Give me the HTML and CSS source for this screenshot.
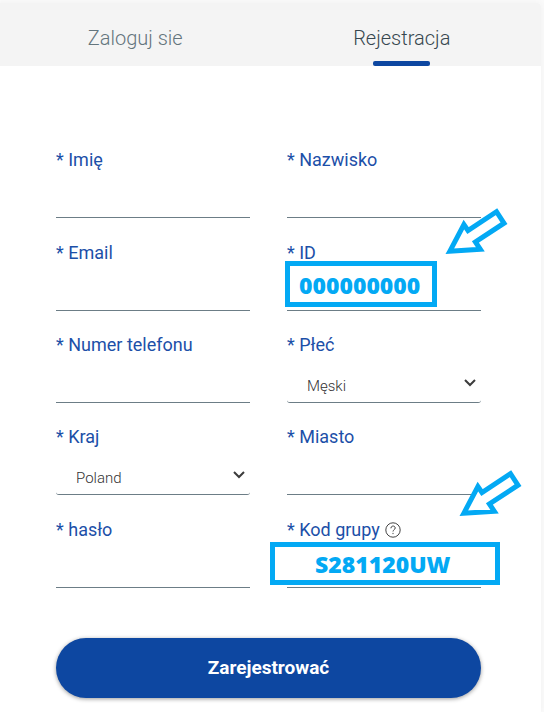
FILE: index.html
```html
<!DOCTYPE html>
<html lang="pl">
<head>
<meta charset="utf-8">
<meta name="viewport" content="width=device-width, initial-scale=1">
<title>Rejestracja</title>
<link rel="stylesheet" href="styles.css">
</head>
<body>
<main class="card">
  <nav class="tabs">
    <a class="tab" href="#login">Zaloguj sie</a>
    <a class="tab tab-active" href="#register" aria-current="page">Rejestracja</a>
  </nav>
  <form class="form">
    <div class="fields">
      <div class="field">
        <label for="first">* Imię</label>
        <input id="first" type="text">
      </div>
      <div class="field">
        <label for="last">* Nazwisko</label>
        <input id="last" type="text">
      </div>
      <div class="field">
        <label for="email">* Email</label>
        <input id="email" type="email">
      </div>
      <div class="field">
        <label for="pid">* ID</label>
        <input id="pid" class="marked marked-id" type="text" value="000000000">
        <span class="frame frame-id"></span>
        <svg class="arrow arrow-id" viewBox="0 0 62 46" aria-hidden="true"><path d="M4.800 43.300 18.900 16.600 23 22.500 51.500 3.700 59 15.200 30.400 34 35.300 41.300z"/></svg>
      </div>
      <div class="field">
        <label for="phone">* Numer telefonu</label>
        <input id="phone" type="tel">
      </div>
      <div class="field">
        <label for="sex">* Płeć</label>
        <select id="sex"><option>Męski</option><option>Żeński</option></select>
        <svg class="chevron" viewBox="0 0 12 8" aria-hidden="true"><path d="M1 1l5 5 5-5"/></svg>
      </div>
      <div class="field">
        <label for="country">* Kraj</label>
        <select id="country"><option>Poland</option></select>
        <svg class="chevron" viewBox="0 0 12 8" aria-hidden="true"><path d="M1 1l5 5 5-5"/></svg>
      </div>
      <div class="field">
        <label for="city">* Miasto</label>
        <input id="city" type="text">
      </div>
      <div class="field">
        <label for="password">* hasło</label>
        <input id="password" type="password">
      </div>
      <div class="field">
        <div class="label-row">
          <label for="group">* Kod grupy</label>
          <button class="help" type="button" aria-label="Pomoc">
            <svg viewBox="0 0 16 16"><circle cx="8" cy="8" r="7.200"/><path d="M5.900 6.300c0-3 4.300-3 4.300-.3 0 1.700-2.200 1.800-2.200 3.500M8 10.900v1.200"/></svg>
          </button>
        </div>
        <input id="group" class="marked marked-group" type="text" value="S281120UW">
        <span class="frame frame-group"></span>
        <svg class="arrow arrow-group" viewBox="0 0 62 46" aria-hidden="true"><path d="M4.800 43.300 18.900 16.600 23 22.500 51.500 3.700 59 15.200 30.400 34 35.300 41.300z"/></svg>
      </div>
    </div>
    <button class="submit" type="submit">Zarejestrować</button>
  </form>
</main>
</body>
</html>
```
FILE: styles.css
```css
* {
  box-sizing: border-box;
}

body {
  margin: 0;
  background: #fafafa;
  font-family: Roboto, "Liberation Sans", sans-serif;
  overflow: hidden auto;
}

.card {
  margin: 3px 3px 0 -4px;
  min-height: calc(100vh - 3px);
  background: #fff;
  border-radius: 4px 4px 0 0;
  box-shadow: 0 0 6px rgba(0, 0, 0, 0.04);
}

.tabs {
  display: flex;
  padding: 0 6px;
  background: #f4f4f4;
  border-radius: 4px 4px 0 0;
}

.tab {
  flex: 1;
  display: flex;
  flex-direction: column;
  align-items: center;
  padding-top: 23px;
  height: 63px;
  font-size: 20px;
  font-weight: 300;
  line-height: 24px;
  color: #64757d;
  text-decoration: none;
}

.tab-active {
  color: #37474f;
}

.tab-active::after {
  content: "";
  width: 57px;
  height: 5px;
  margin-top: auto;
  border-radius: 2px;
  background: #0d47a1;
}

.form {
  padding: 59px 60px 14px;
}

.fields {
  display: grid;
  grid-template-columns: 1fr 1fr;
  grid-template-rows: 93px 93px 92px 92px 93px;
  column-gap: 37px;
}

.field {
  position: relative;
  display: flex;
  flex-direction: column;
  justify-content: flex-end;
  min-width: 0;
}

label {
  font-size: 18px;
  line-height: 24px;
  color: #1c4fa8;
}

.label-row {
  display: flex;
  align-items: center;
  gap: 5px;
}

input,
select {
  width: 100%;
  height: 46px;
  margin: 0;
  padding: 0;
  border: 0;
  border-bottom: 1px solid #6c7d86;
  border-radius: 0;
  background: transparent;
  font: 300 15px/20px Roboto, "Liberation Sans", sans-serif;
  color: #333;
  outline: 0;
}

select {
  appearance: none;
  padding: 13px 28px 0 20px;
  border-radius: 3px;
}

.chevron {
  position: absolute;
  right: 5px;
  bottom: 16px;
  width: 12px;
  height: 8px;
  fill: none;
  stroke: #3c3c3c;
  stroke-width: 2;
  pointer-events: none;
}

.marked {
  font: 800 23px/30px "Open Sans", "Noto Sans", sans-serif;
  color: #03a9f4;
}

.marked-id {
  padding: 0 0 6px 12px;
}

.marked-group {
  padding: 0 0 2px 28px;
}

.frame {
  position: absolute;
  border: 5px solid #03a9f4;
  pointer-events: none;
}

.frame-id {
  left: -2px;
  bottom: 4px;
  width: 152px;
  height: 46px;
}

.frame-group {
  left: -17px;
  right: -19px;
  bottom: 3px;
  height: 43px;
}

.arrow {
  position: absolute;
  width: 62px;
  height: 46px;
  fill: #fff;
  stroke: #03a9f4;
  stroke-width: 5;
  overflow: visible;
  pointer-events: none;
}

.arrow-id {
  top: -10px;
  right: -26px;
}

.arrow-group {
  top: -25px;
  right: -40px;
}

.help {
  width: 16px;
  height: 16px;
  padding: 0;
  border: 0;
  background: none;
}

.help svg {
  display: block;
  fill: none;
  stroke: #444;
}

.submit {
  display: block;
  width: 100%;
  height: 60px;
  margin-top: 50px;
  border: 0;
  border-radius: 30px;
  background: #0d47a1;
  box-shadow: 0 1px 4px rgba(0, 0, 0, 0.4);
  font: bold 19px/24px Roboto, "Liberation Sans", sans-serif;
  color: #fff;
}
```
